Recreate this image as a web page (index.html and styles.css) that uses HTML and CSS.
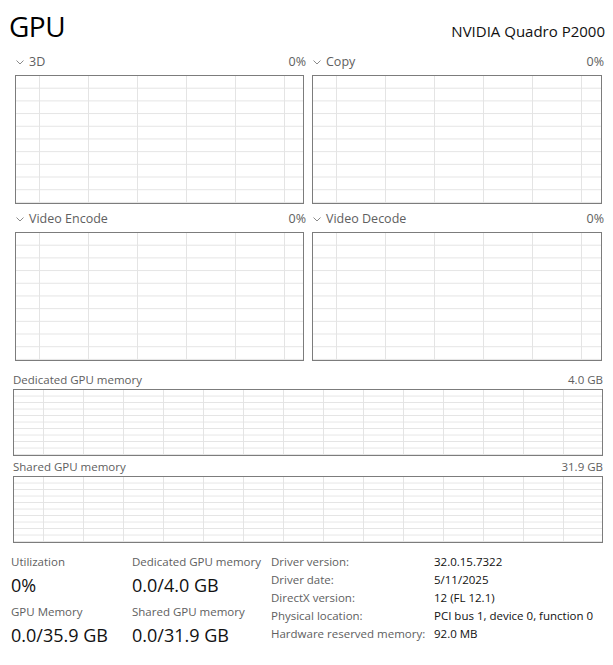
FILE: index.html
```html
<!DOCTYPE html>
<html lang="en">
<head>
    <meta charset="UTF-8">
    <meta name="viewport" content="width=device-width, initial-scale=1.0">
    <title>Performance - GPU</title>
    <link rel="stylesheet" href="styles.css">
</head>
<body>

<div class="page">
    <header class="head">
        <h1>GPU</h1>
        <div class="model">NVIDIA Quadro P2000</div>
    </header>

    <!-- engine graphs, two per row -->
    <section class="engines">
        <div class="engine">
            <div class="engine-head">
                <span class="engine-name"><svg class="chevron" width="8" height="5" viewBox="0 0 8 5"><polyline points="0.5,0.5 4,4 7.5,0.5"/></svg>3D</span>
                <span class="engine-value">0%</span>
            </div>
            <div class="chart"></div>
        </div>
        <div class="engine">
            <div class="engine-head">
                <span class="engine-name"><svg class="chevron" width="8" height="5" viewBox="0 0 8 5"><polyline points="0.5,0.5 4,4 7.5,0.5"/></svg>Copy</span>
                <span class="engine-value">0%</span>
            </div>
            <div class="chart"></div>
        </div>
        <div class="engine">
            <div class="engine-head">
                <span class="engine-name"><svg class="chevron" width="8" height="5" viewBox="0 0 8 5"><polyline points="0.5,0.5 4,4 7.5,0.5"/></svg>Video Encode</span>
                <span class="engine-value">0%</span>
            </div>
            <div class="chart"></div>
        </div>
        <div class="engine">
            <div class="engine-head">
                <span class="engine-name"><svg class="chevron" width="8" height="5" viewBox="0 0 8 5"><polyline points="0.5,0.5 4,4 7.5,0.5"/></svg>Video Decode</span>
                <span class="engine-value">0%</span>
            </div>
            <div class="chart"></div>
        </div>
    </section>

    <!-- memory graphs -->
    <section class="memory">
        <div class="mem-head">
            <span>Dedicated GPU memory</span>
            <span>4.0 GB</span>
        </div>
        <div class="chart chart-mem"></div>
        <div class="mem-head mem-head-2">
            <span>Shared GPU memory</span>
            <span>31.9 GB</span>
        </div>
        <div class="chart chart-mem"></div>
    </section>

    <section class="stats">
        <div class="stat-col">
            <div class="stat">
                <div class="stat-label">Utilization</div>
                <div class="stat-value">0%</div>
            </div>
            <div class="stat">
                <div class="stat-label">GPU Memory</div>
                <div class="stat-value">0.0/35.9 GB</div>
            </div>
        </div>
        <div class="stat-col">
            <div class="stat">
                <div class="stat-label">Dedicated GPU memory</div>
                <div class="stat-value">0.0/4.0 GB</div>
            </div>
            <div class="stat">
                <div class="stat-label">Shared GPU memory</div>
                <div class="stat-value">0.0/31.9 GB</div>
            </div>
        </div>
        <dl class="info">
            <dt>Driver version:</dt><dd>32.0.15.7322</dd>
            <dt>Driver date:</dt><dd>5/11/2025</dd>
            <dt>DirectX version:</dt><dd>12 (FL 12.1)</dd>
            <dt>Physical location:</dt><dd>PCI bus 1, device 0, function 0</dd>
            <dt>Hardware reserved memory:</dt><dd>92.0 MB</dd>
        </dl>
    </section>
</div>

</body>
</html>
```

FILE: styles.css
```css
body {
    margin: 0;
    background-color: #fff;
    font-family: "Open Sans", "Noto Sans", sans-serif;
    color: #111;
}

.page {
    width: 613px;
    height: 665px;
    overflow: hidden;
}

/* title row */
.head {
    display: flex;
    justify-content: space-between;
    align-items: baseline;
    padding: 8px 8px 0 9px;
    height: 45px;
    box-sizing: border-box;
}

h1 {
    margin: 0;
    font-size: 28px;
    font-weight: 400;
    line-height: 36px;
    letter-spacing: -0.5px;
    color: #000;
}

.model {
    font-size: 15px;
    color: #111;
}

/* engine graphs */
.engines {
    display: grid;
    grid-template-columns: 289px 290px;
    column-gap: 8px;
    row-gap: 6px;
    padding: 8px 0 0 15px;
}

.engine-head {
    display: flex;
    justify-content: space-between;
    height: 22px;
    line-height: 18px;
    font-size: 12.5px;
    color: #606060;
    margin-right: -2px;
}

.engine-name {
    display: flex;
    align-items: center;
    height: 18px;
}

.chevron {
    fill: none;
    stroke: #8a8a8a;
    stroke-width: 1;
    margin: 1px 5px 0 1px;
}

.chart {
    height: 129px;
    box-sizing: border-box;
    border: 1px solid #7c7c7c;
    background-color: #fff;
    background-image:
        linear-gradient(to right, #e4e4e4 1px, transparent 1px),
        linear-gradient(to top, #e4e4e4 1px, transparent 1px);
    background-size: 49px 100%, 100% 10%;
    background-position: 23px 0, 0 0;
}

/* memory graphs */
.memory {
    padding: 10px 10px 0 13px;
}

.mem-head {
    display: flex;
    justify-content: space-between;
    height: 18px;
    line-height: 17px;
    font-size: 11.5px;
    color: #606060;
}

.mem-head-2 {
    margin-top: 2px;
}

.chart-mem {
    height: 67px;
    background-size: 40px 100%, 100% 10%;
    background-position: 29px 0, 0 0;
}

/* numbers under the graphs */
.stats {
    display: grid;
    grid-template-columns: 121px 139px 1fr;
    align-items: start;
    padding: 11px 0 0 11px;
}

.stat {
    margin-bottom: 6px;
}

.stat-label {
    font-size: 11.5px;
    line-height: 16px;
    color: #606060;
    margin-bottom: 2px;
}

.stat-value {
    font-size: 18px;
    line-height: 26px;
    color: #111;
}

.info {
    display: grid;
    grid-template-columns: 163px auto;
    align-content: start;
    margin: -1px 0 0;
    font-size: 11.5px;
    line-height: 18px;
}

.info dt {
    color: #606060;
}

.info dd {
    margin: 0;
    color: #111;
}
```
